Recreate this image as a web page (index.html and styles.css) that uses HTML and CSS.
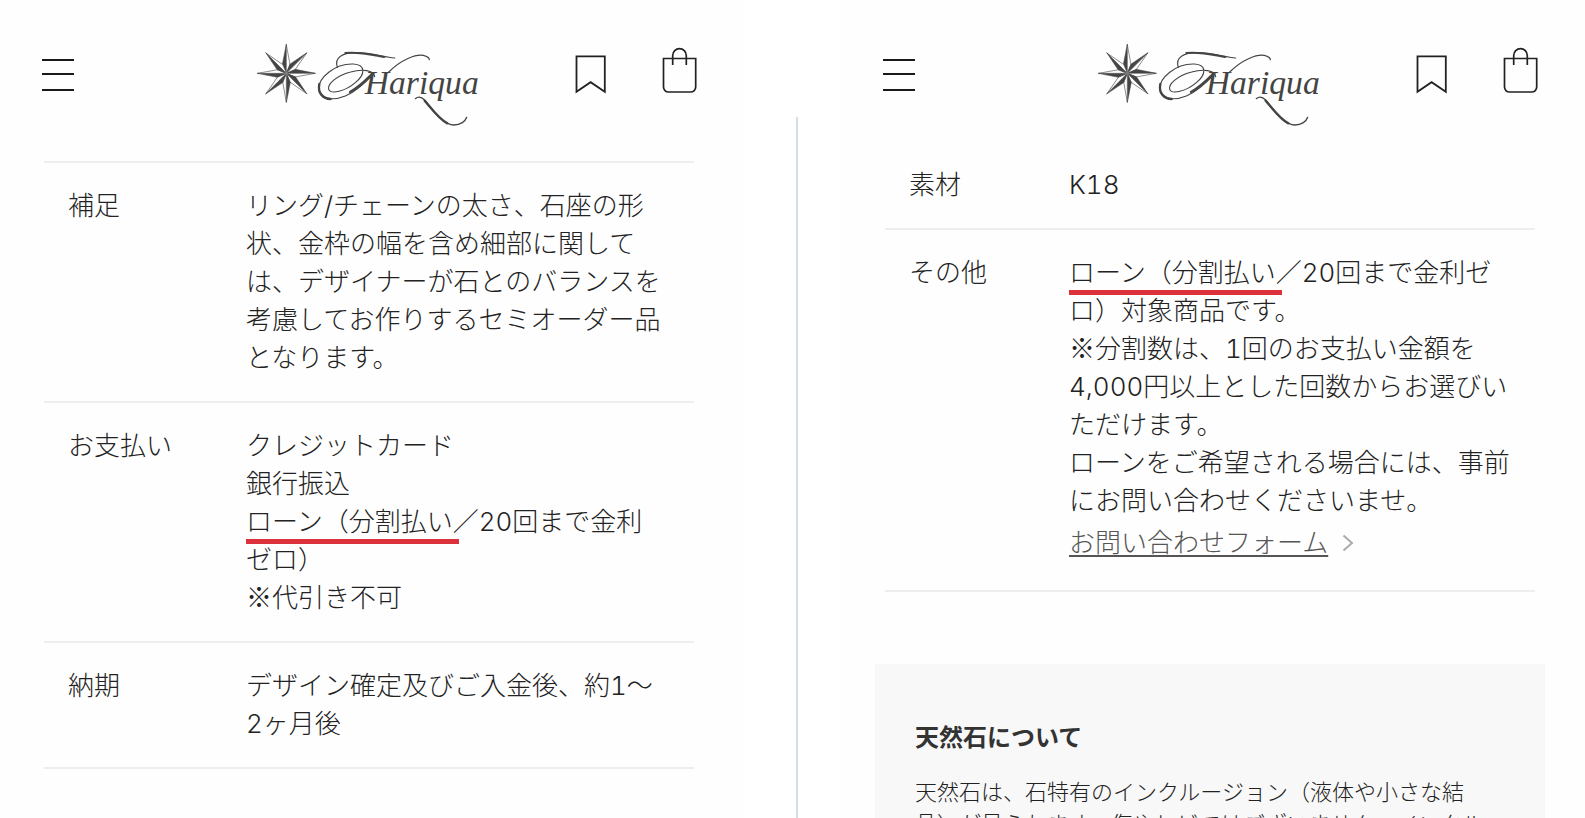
FILE: index.html
```html
<!DOCTYPE html>
<html lang="ja">
<head>
<meta charset="utf-8">
<meta name="viewport" content="width=device-width, initial-scale=1">
<title>Hariqua</title>
<link rel="stylesheet" href="styles.css">
</head>
<body>
<svg class="sprite" aria-hidden="true">
  <defs>
    <g id="ray">
      <polygon points="0,0 0,-88 -12,-27" fill="#444" stroke="#444" stroke-width="1.5"/>
      <polygon points="0,0 0,-86 11,-26" fill="#fefefe" stroke="#444" stroke-width="1.8"/>
    </g>
    <symbol id="logo" viewBox="48 66 684 258">
      <g transform="translate(139 160)">
        <use href="#ray"/>
        <use href="#ray" transform="rotate(45)"/>
        <use href="#ray" transform="rotate(90)"/>
        <use href="#ray" transform="rotate(135)"/>
        <use href="#ray" transform="rotate(180)"/>
        <use href="#ray" transform="rotate(225)"/>
        <use href="#ray" transform="rotate(270)"/>
        <use href="#ray" transform="rotate(315)"/>
        <circle r="6" fill="#777"/>
      </g>
      <g fill="none" stroke="#444" stroke-linecap="round">
        <path stroke-width="3.5" d="M292 142C282 112 308 98 350 98C396 98 432 112 464 114"/>
        <path stroke-width="6" d="M316 99C356 94 398 105 432 111"/>
        <path stroke-width="3.5" d="M404 170C402 150 366 146 332 156C286 168 262 194 266 208C272 224 316 214 346 188C376 164 378 134 340 132C284 130 234 174 236 208C238 236 276 244 316 228C350 214 378 186 402 160"/>
        <path stroke-width="7" d="M238 192C232 220 250 236 272 237M330 216C352 204 374 184 392 166"/>
        <path stroke-width="3.5" d="M446 156C484 118 528 102 550 106C562 109 568 114 568 119"/>
        <path stroke-width="4" d="M526 236C536 228 546 232 554 240C584 276 610 314 642 315C662 315 676 304 680 292"/>
        <path stroke-width="7" d="M554 242C576 268 598 298 622 310"/>
      </g>
      <text class="wordmark" x="374" y="222">Hariqua</text>
    </symbol>
    <symbol id="menu" viewBox="42 42 32 86">
      <path fill="#1a1818" d="M42 59h32v2H42zM42 73h32v2H42zM42 89h32v2H42z"/>
    </symbol>
    <symbol id="bookmark" viewBox="575 42 32 86">
      <path fill="none" stroke="#222" stroke-width="1.8" d="M576.5 56.3h28.3v35.4l-14.2-9.5-14.1 9.5z"/>
    </symbol>
    <symbol id="bag" viewBox="662 42 36 86">
      <path fill="none" stroke="#222" stroke-width="1.7" d="M663.5 58.5h32.2V87a5 5 0 0 1-5 5h-22.2a5 5 0 0 1-5-5zM672.7 65v-9.500a6.800 6.800 0 0 1 13.600 0V65"/>
    </symbol>
  </defs>
</svg>
<main class="page">
  <section class="screen">
    <header class="header">
      <button class="icon-button" type="button" aria-label="メニュー"><svg width="32" height="86"><use href="#menu"/></svg></button>
      <a class="logo" href="#" aria-label="Hariqua"><svg width="228" height="86"><use href="#logo"/></svg></a>
      <nav class="tools">
        <a href="#" aria-label="お気に入り"><svg width="32" height="86"><use href="#bookmark"/></svg></a>
        <a href="#" aria-label="カート"><svg width="36" height="86"><use href="#bag"/></svg></a>
      </nav>
    </header>
    <table class="spec spec-order">
      <tr><th scope="row">補足</th><td>リング/チェーンの太さ、石座の形状、金枠の幅を含め細部に関しては、デザイナーが石とのバランスを考慮してお作りするセミオーダー品となります。</td></tr>
      <tr><th scope="row">お支払い</th><td>クレジットカード<br>銀行振込<br><span class="marked">ローン（分割払い</span>／20回まで金利ゼロ）<br><span class="symbol">※</span>代引き不可</td></tr>
      <tr><th scope="row">納期</th><td>デザイン確定及びご入金後、約1<span class="symbol">〜</span>2ヶ月後</td></tr>
    </table>
  </section>
  <div class="divider"></div>
  <section class="screen">
    <header class="header">
      <button class="icon-button" type="button" aria-label="メニュー"><svg width="32" height="86"><use href="#menu"/></svg></button>
      <a class="logo" href="#" aria-label="Hariqua"><svg width="228" height="86"><use href="#logo"/></svg></a>
      <nav class="tools">
        <a href="#" aria-label="お気に入り"><svg width="32" height="86"><use href="#bookmark"/></svg></a>
        <a href="#" aria-label="カート"><svg width="36" height="86"><use href="#bag"/></svg></a>
      </nav>
    </header>
    <table class="spec spec-item">
      <tr><th scope="row">素材</th><td>K18</td></tr>
      <tr><th scope="row">その他</th><td><span class="marked">ローン（分割払い</span>／20回まで金利ゼロ）対象商品です。<br><span class="symbol">※</span>分割数は、1回のお支払い金額を4,000円以上とした回数からお選びいただけます。<br>ローンをご希望される場合には、事前にお問い合わせくださいませ。
        <div class="contact"><a href="#">お問い合わせフォーム</a><svg width="12" height="18" viewBox="0 0 12 18" aria-hidden="true"><path d="M1.5 1.5 10 9l-8.500 7.500" fill="none" stroke="#aaa" stroke-width="2"/></svg></div></td></tr>
    </table>
    <aside class="note">
      <h2>天然石について</h2>
      <p>天然石は、石特有のインクルージョン（液体や小さな結晶）が見られます。傷やヒビではございません。インクル</p>
    </aside>
  </section>
</main>
</body>
</html>
```
FILE: styles.css
```css
* { box-sizing: border-box; }

body {
  margin: 0;
  background: #fff;
  color: #222;
  font: 300 26px/38px Inter, "Noto Sans CJK JP", sans-serif;
  font-variant-numeric: tabular-nums;
}

.sprite { position: absolute; width: 0; height: 0; }
svg { display: block; }

.page {
  display: grid;
  grid-template-columns: minmax(0, 1fr) 97px minmax(0, 1fr);
  height: 100vh;
  overflow: hidden;
}

.screen { background: #fefefe; }

.divider {
  width: 2px;
  margin: 117px 0 0 52px;
  background: #d4dfe6;
}

.header {
  display: grid;
  grid-template-columns: 1fr auto 1fr;
  padding: 42px 46px 14px 42px;
}

.icon-button {
  justify-self: start;
  padding: 0;
  border: 0;
  background: none;
}

.tools {
  display: flex;
  justify-content: flex-end;
  gap: 55px;
}

.wordmark {
  fill: #444;
  font: italic 400 101px "Liberation Serif", serif;
}

.spec {
  width: calc(100% - 94px);
  margin: 0 50px 0 44px;
  border-spacing: 0;
  table-layout: fixed;
}

.spec th,
.spec td {
  padding: 24px;
  border-bottom: 2px solid #eee;
  font-weight: 300;
  text-align: left;
  vertical-align: top;
}

.spec th { padding-right: 0; }

.spec-order { margin-top: 19px; border-top: 2px solid #eee; }
.spec-order th { width: 178px; }
.spec-order td { padding-right: 28px; }
.spec-item th { width: 160px; }

.symbol {
  font-family: "Noto Sans CJK JP", sans-serif;
  line-height: 1;
}

.marked {
  display: inline-block;
  position: relative;
}

.marked::after {
  content: "";
  position: absolute;
  right: -6px;
  bottom: -3px;
  left: 0;
  height: 5px;
  background: #dc323b;
}

.contact {
  display: flex;
  align-items: center;
  gap: 14px;
  padding-top: 4px;
  padding-bottom: 4px;
}

.contact a {
  color: #555;
  text-decoration: underline 2px;
  text-underline-offset: 3px;
}

.note {
  margin: 72px 40px 0 34px;
  padding: 55px 50px 55px 40px;
  background: #f8f8f8;
}

.note h2 {
  margin: 0 0 19px;
  color: #333;
  font-size: 24px;
  font-weight: 700;
  line-height: 38px;
}

.note p {
  margin: 0;
  font-size: 22px;
  line-height: 32px;
}
```
